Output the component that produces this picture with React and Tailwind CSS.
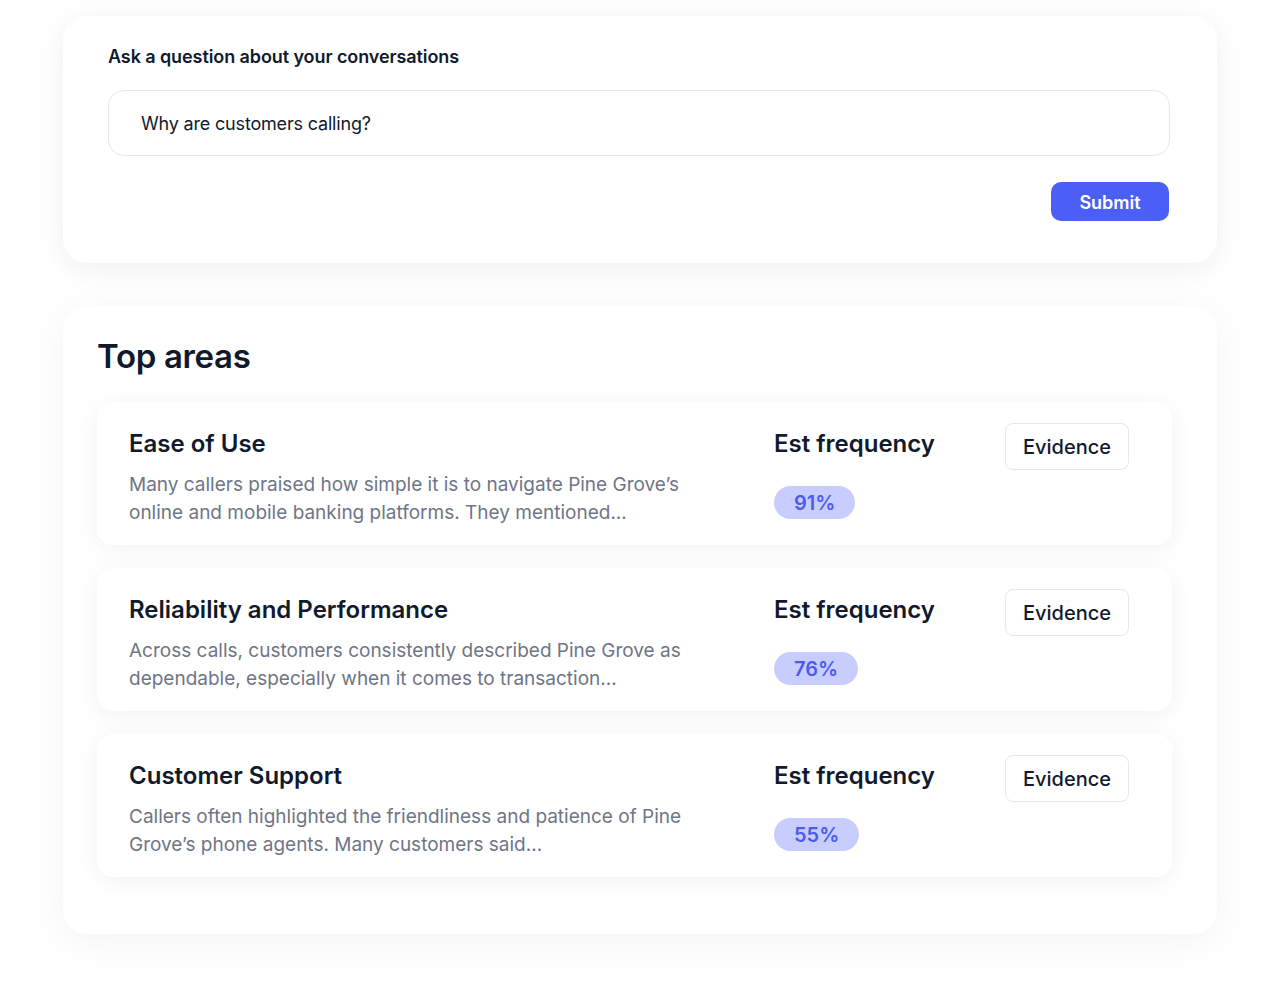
const areas = [
  {
    title: 'Ease of Use',
    desc: 'Many callers praised how simple it is to navigate Pine Grove’s online and mobile banking platforms. They mentioned...',
    pct: '91%',
  },
  {
    title: 'Reliability and Performance',
    desc: 'Across calls, customers consistently described Pine Grove as dependable, especially when it comes to transaction...',
    pct: '76%',
  },
  {
    title: 'Customer Support',
    desc: 'Callers often highlighted the friendliness and patience of Pine Grove’s phone agents. Many customers said...',
    pct: '55%',
  },
]

function AreaCard({ area }) {
  return (
    <div className="grid grid-cols-[1fr_231px_124px] rounded-2xl bg-white pl-8 pr-[43px] pt-[21px] pb-[18px] shadow-[0_4px_24px_rgba(15,23,42,0.06)]">
      <div className="pt-[5px]">
        <h3 className="text-2xl leading-8 font-semibold text-[#111a2c]">{area.title}</h3>
        <p className="mt-[11px] max-w-[580px] text-[19px] leading-7 text-[#6e7586]">{area.desc}</p>
      </div>
      <div className="pt-[5px]">
        <div className="text-2xl leading-8 font-semibold text-[#111a2c]">Est frequency</div>
        <span className="mt-[26px] inline-flex h-[33px] items-center rounded-full bg-[#c8cdfd] px-5 text-xl font-semibold text-[#4a5cf0]">
          {area.pct}
        </span>
      </div>
      <div>
        <button className="h-[47px] w-[124px] rounded-lg border border-gray-200 bg-white text-xl font-medium text-[#111a2c]">
          Evidence
        </button>
      </div>
    </div>
  )
}

export default function App() {
  return (
    <div className="min-h-[1004px] bg-white px-[63px] pt-4 font-['Inter',sans-serif]">
      <div className="rounded-3xl bg-white pl-[45px] pr-[47px] pt-[29px] pb-[42px] shadow-[0_6px_30px_rgba(15,23,42,0.07)]">
        <h2 className="text-lg leading-6 font-semibold tracking-[-0.005em] text-[#111a2c]">Ask a question about your conversations</h2>
        <div className="mt-[21px] flex h-[66px] items-center rounded-2xl border border-gray-200 px-8 pt-[2px] text-lg tracking-[-0.01em] text-[#111a2c]">
          Why are customers calling?
        </div>
        <div className="mt-[26px] flex justify-end">
          <button className="mr-px h-[39px] w-[118px] rounded-[10px] bg-[#4b5ff7] pt-[3px] text-lg font-semibold text-white">Submit</button>
        </div>
      </div>

      <div className="mt-[42px] rounded-3xl bg-white pl-[34px] pr-[45px] pt-[31px] pb-[57px] shadow-[0_8px_40px_rgba(15,23,42,0.05)]">
        <h2 className="text-[33px] leading-10 font-semibold tracking-[-0.01em] text-[#111a2c]">Top areas</h2>
        <div className="mt-[26px] flex flex-col gap-[23px]">
          {areas.map((a) => (
            <AreaCard key={a.title} area={a} />
          ))}
        </div>
      </div>
    </div>
  )
}
